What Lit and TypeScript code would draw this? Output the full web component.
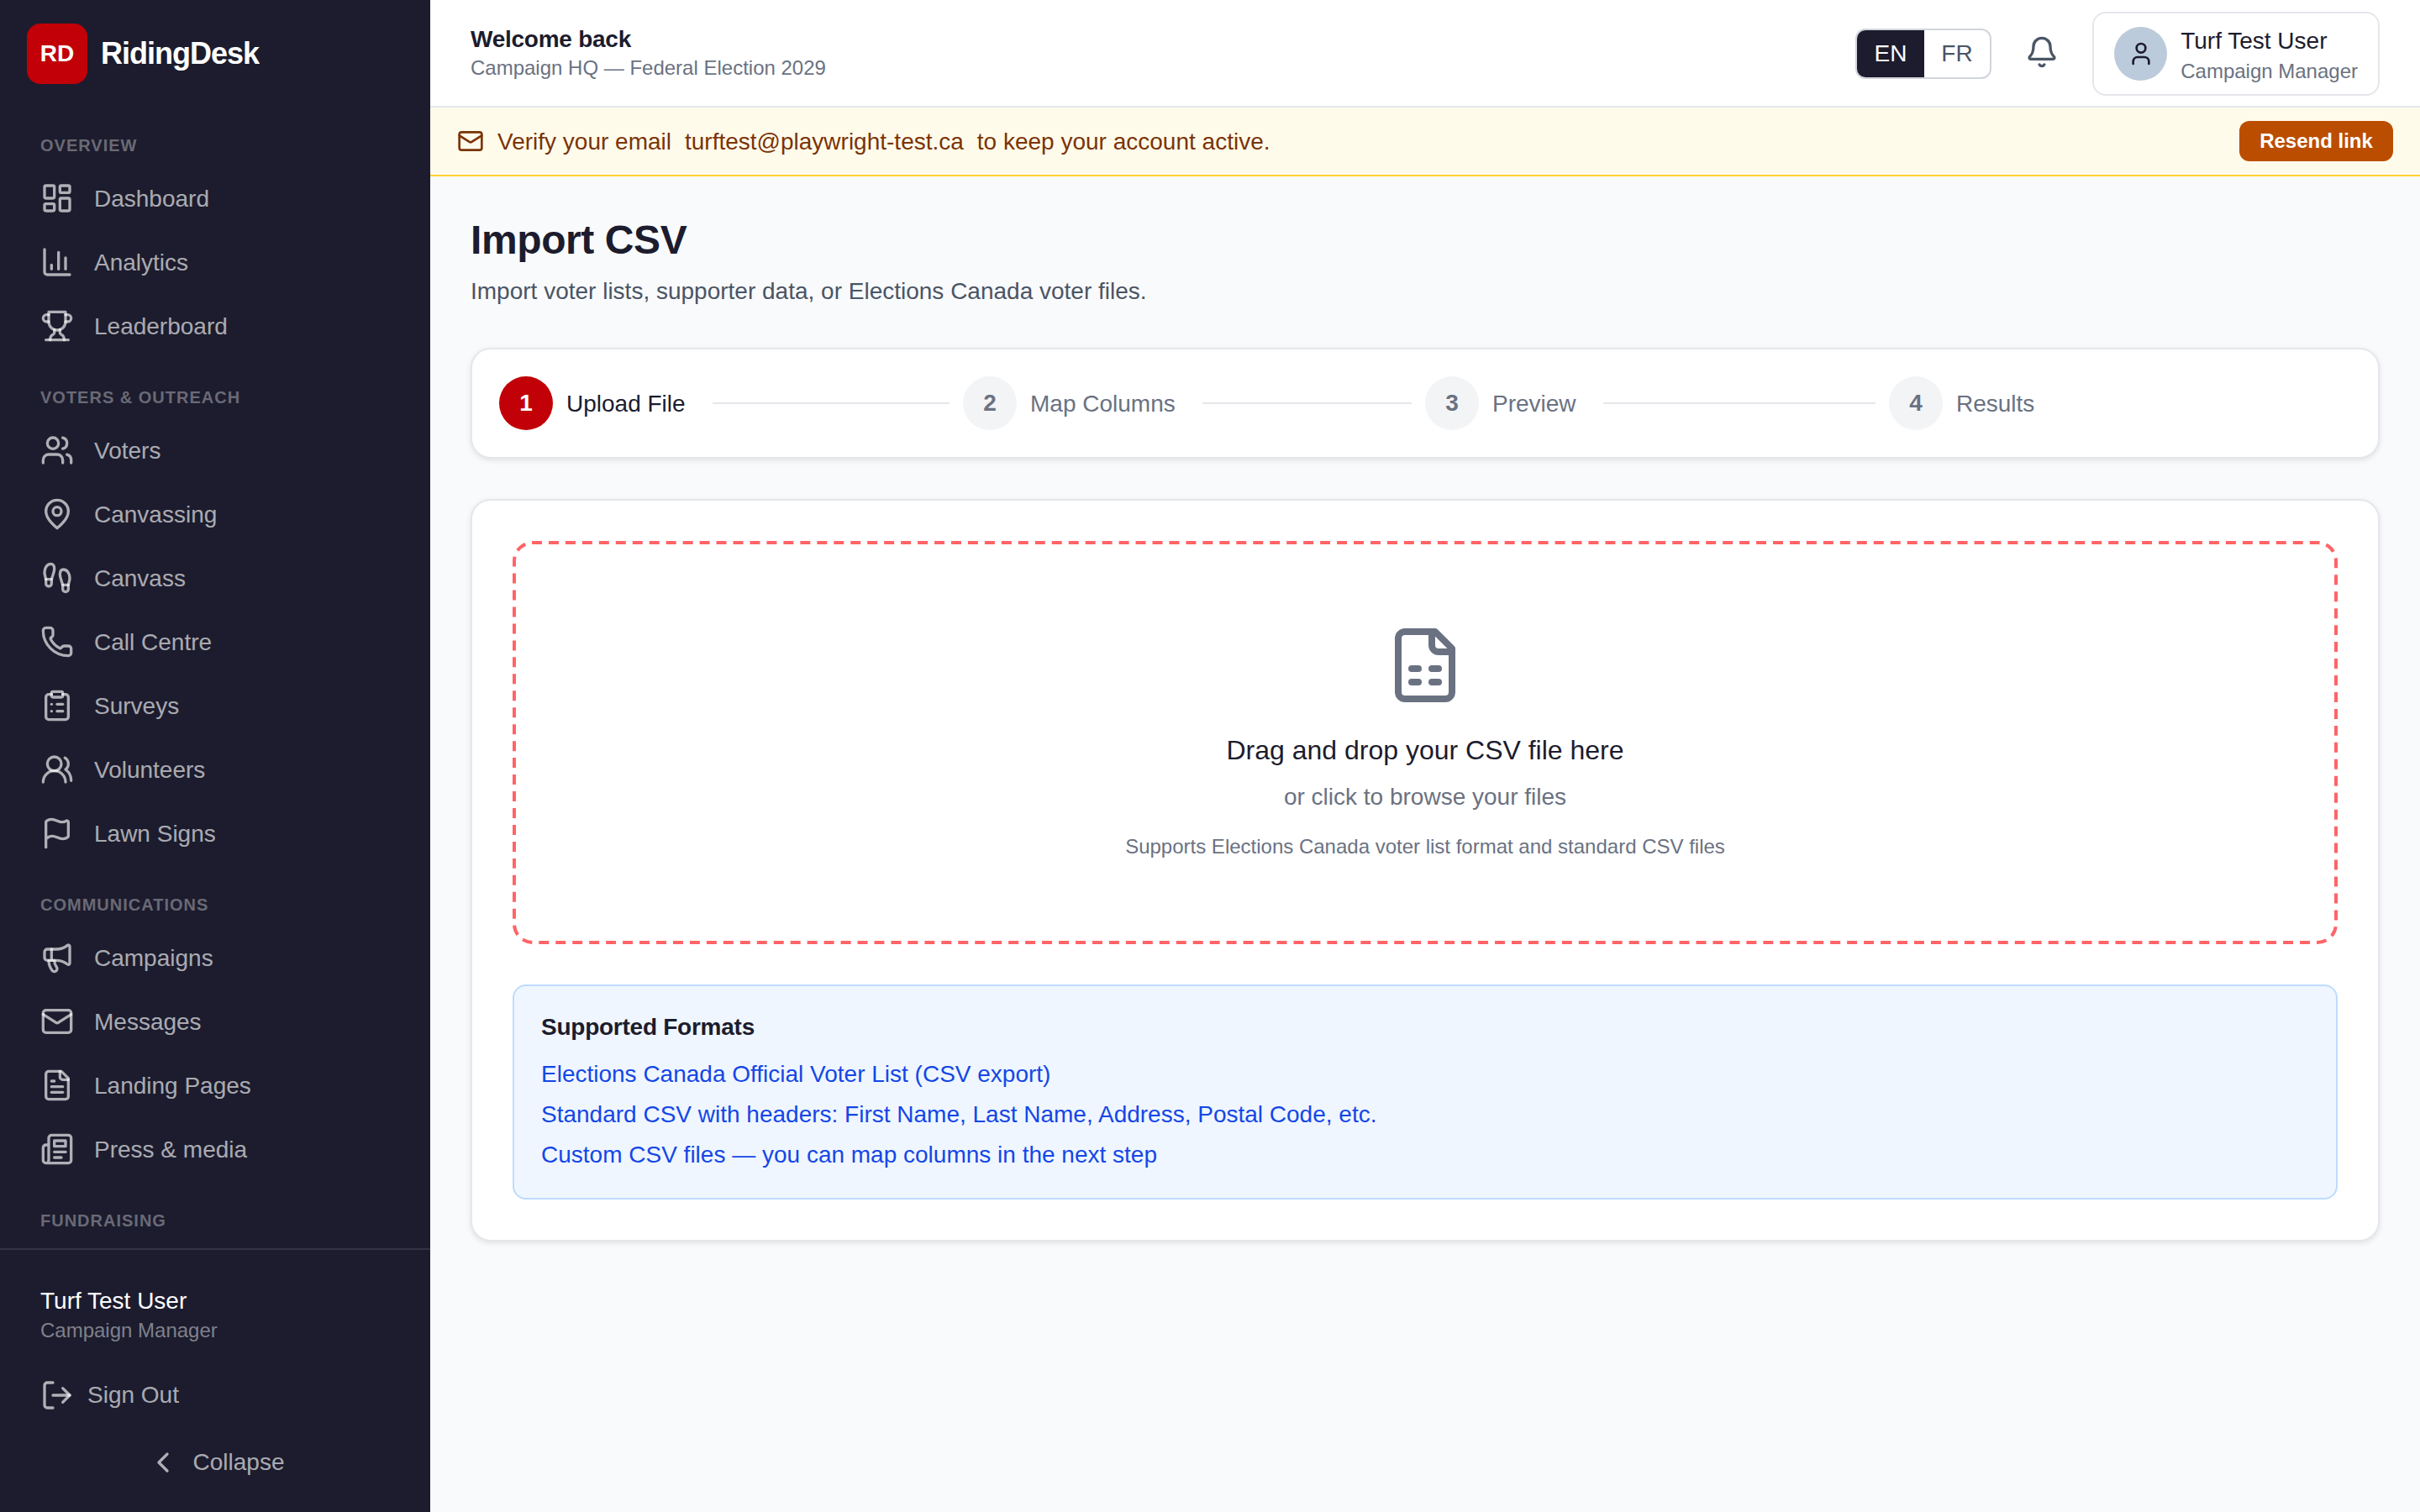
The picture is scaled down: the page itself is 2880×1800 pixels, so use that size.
import { css, html, LitElement, svg } from "lit";
import { customElement } from "lit/decorators.js";

// lucide-style icon bodies, all on a 24 unit box
const ICONS: Record<string, unknown> = {
  dashboard: svg`<rect x="3" y="3" width="7" height="9" rx="1"/><rect x="14" y="3" width="7" height="5" rx="1"/><rect x="14" y="12" width="7" height="9" rx="1"/><rect x="3" y="16" width="7" height="5" rx="1"/>`,
  chart: svg`<path d="M3 3v16a2 2 0 0 0 2 2h16"/><path d="M18 17V9"/><path d="M13 17V5"/><path d="M8 17v-3"/>`,
  trophy: svg`<path d="M6 9H4.5a2.5 2.5 0 0 1 0-5H6"/><path d="M18 9h1.5a2.5 2.5 0 0 0 0-5H18"/><path d="M4 22h16"/><path d="M10 14.66V17c0 .55-.47.98-.97 1.21C7.85 18.75 7 20.24 7 22"/><path d="M14 14.66V17c0 .55.47.98.97 1.21C16.15 18.75 17 20.24 17 22"/><path d="M18 2H6v7a6 6 0 0 0 12 0V2Z"/>`,
  users: svg`<path d="M16 21v-2a4 4 0 0 0-4-4H6a4 4 0 0 0-4 4v2"/><circle cx="9" cy="7" r="4"/><path d="M22 21v-2a4 4 0 0 0-3-3.87"/><path d="M16 3.13a4 4 0 0 1 0 7.75"/>`,
  pin: svg`<path d="M20 10c0 6-8 12-8 12s-8-6-8-12a8 8 0 0 1 16 0Z"/><circle cx="12" cy="10" r="3"/>`,
  footprints: svg`<path d="M4 16v-2.38C4 11.5 2.97 10.5 3 8c.03-2.72 1.49-6 4.5-6C9.37 2 10 3.8 10 5.5c0 3.11-2 5.66-2 8.68V16a2 2 0 1 1-4 0Z"/><path d="M20 20v-2.38c0-2.12 1.03-3.12 1-5.62-.03-2.72-1.49-6-4.5-6C14.63 6 14 7.8 14 9.5c0 3.11 2 5.66 2 8.68V20a2 2 0 1 0 4 0Z"/><path d="M16 17h4"/><path d="M4 13h4"/>`,
  phone: svg`<path d="M13.832 16.568a1 1 0 0 0 1.213-.303l.355-.465A2 2 0 0 1 17 15h3a2 2 0 0 1 2 2v3a2 2 0 0 1-2 2A18 18 0 0 1 2 4a2 2 0 0 1 2-2h3a2 2 0 0 1 2 2v3a2 2 0 0 1-.8 1.6l-.468.351a1 1 0 0 0-.292 1.233 14 14 0 0 0 6.392 6.384"/>`,
  clipboard: svg`<rect x="8" y="2" width="8" height="4" rx="1"/><path d="M16 4h2a2 2 0 0 1 2 2v14a2 2 0 0 1-2 2H6a2 2 0 0 1-2-2V6a2 2 0 0 1 2-2h2"/><path d="M12 11h4"/><path d="M12 16h4"/><path d="M8 11h.01"/><path d="M8 16h.01"/>`,
  usersRound: svg`<path d="M18 21a8 8 0 0 0-16 0"/><circle cx="10" cy="8" r="5"/><path d="M22 20c0-3.37-2-6.5-4-8a5 5 0 0 0-.45-8.3"/>`,
  flag: svg`<path d="M4 22V4a1 1 0 0 1 .4-.8A6 6 0 0 1 8 2c3 0 5 2 7.333 2q2 0 3.067-.8A1 1 0 0 1 20 4v10a1 1 0 0 1-.4.8A6 6 0 0 1 16 16c-3 0-5-2-7.333-2q-2 0-3.067.8A1 1 0 0 1 4 15"/>`,
  megaphone: svg`<path d="M11 6a13 13 0 0 0 8.4-2.8A1 1 0 0 1 21 4v12a1 1 0 0 1-1.6.8A13 13 0 0 0 11 14H5a2 2 0 0 1-2-2V8a2 2 0 0 1 2-2z"/><path d="M6 14a12 12 0 0 0 2.4 7.2 2 2 0 0 0 3.2-2.4A8 8 0 0 1 10 14"/><path d="M8 6v8"/>`,
  mail: svg`<path d="m22 7-8.991 5.727a2 2 0 0 1-2.009 0L2 7"/><rect x="2" y="4" width="20" height="16" rx="2"/>`,
  fileText: svg`<path d="M15 2H6a2 2 0 0 0-2 2v16a2 2 0 0 0 2 2h12a2 2 0 0 0 2-2V7Z"/><path d="M14 2v4a2 2 0 0 0 2 2h4"/><path d="M10 9H8"/><path d="M16 13H8"/><path d="M16 17H8"/>`,
  newspaper: svg`<path d="M4 22h16a2 2 0 0 0 2-2V4a2 2 0 0 0-2-2H8a2 2 0 0 0-2 2v16a2 2 0 0 1-2 2Zm0 0a2 2 0 0 1-2-2v-9c0-1.1.9-2 2-2h2"/><path d="M18 14h-8"/><path d="M15 18h-5"/><path d="M10 6h8v4h-8V6Z"/>`,
  logOut: svg`<path d="M9 21H5a2 2 0 0 1-2-2V5a2 2 0 0 1 2-2h4"/><path d="m16 17 5-5-5-5"/><path d="M21 12H9"/>`,
  chevronLeft: svg`<path d="m15 18-6-6 6-6"/>`,
  bell: svg`<path d="M10.268 21a2 2 0 0 0 3.464 0"/><path d="M3.262 15.326A1 1 0 0 0 4 17h16a1 1 0 0 0 .74-1.673C19.41 13.956 18 12.499 18 8A6 6 0 0 0 6 8c0 4.499-1.411 5.956-2.738 7.326"/>`,
  user: svg`<path d="M19 21v-2a4 4 0 0 0-4-4H9a4 4 0 0 0-4 4v2"/><circle cx="12" cy="7" r="4"/>`,
  sheet: svg`<path d="M15 2H6a2 2 0 0 0-2 2v16a2 2 0 0 0 2 2h12a2 2 0 0 0 2-2V7Z"/><path d="M14 2v4a2 2 0 0 0 2 2h4"/><path d="M8 13h2"/><path d="M14 13h2"/><path d="M8 17h2"/><path d="M14 17h2"/>`,
};

const icon = (name: string, size = 40) => html`<svg
  width=${size}
  height=${size}
  viewBox="0 0 24 24"
  fill="none"
  stroke="currentColor"
  stroke-width="2"
  stroke-linecap="round"
  stroke-linejoin="round"
>${ICONS[name]}</svg>`;

const NAV = [
  {
    title: "Overview",
    items: [
      ["dashboard", "Dashboard"],
      ["chart", "Analytics"],
      ["trophy", "Leaderboard"],
    ],
  },
  {
    title: "Voters & Outreach",
    items: [
      ["users", "Voters"],
      ["pin", "Canvassing"],
      ["footprints", "Canvass"],
      ["phone", "Call Centre"],
      ["clipboard", "Surveys"],
      ["usersRound", "Volunteers"],
      ["flag", "Lawn Signs"],
    ],
  },
  {
    title: "Communications",
    items: [
      ["megaphone", "Campaigns"],
      ["mail", "Messages"],
      ["fileText", "Landing Pages"],
      ["newspaper", "Press & media"],
    ],
  },
  { title: "Fundraising", items: [] },
];

const STEPS = ["Upload File", "Map Columns", "Preview", "Results"];

const FORMATS = [
  "Elections Canada Official Voter List (CSV export)",
  "Standard CSV with headers: First Name, Last Name, Address, Postal Code, etc.",
  "Custom CSV files — you can map columns in the next step",
];

@customElement("app-root")
export class AppRoot extends LitElement {
  static styles = css`
    :host {
      display: flex;
      width: 100%;
      height: 100vh;
      overflow: hidden;
      font-family: "Liberation Sans", Arial, sans-serif;
      font-size: 28px;
      color: #1c1c2e;
      background: #f9fafb;
    }
    svg {
      display: block;
      flex: none;
    }

    /* sidebar */
    .sidebar {
      flex: none;
      width: 512px;
      display: flex;
      flex-direction: column;
      background: #1c1c2e;
      color: rgba(255, 255, 255, 0.65);
    }
    .brand {
      display: flex;
      align-items: center;
      gap: 16px;
      padding: 28px 32px 26px;
    }
    .logo {
      width: 72px;
      height: 72px;
      border-radius: 16px;
      background: #c10007;
      color: #fff;
      font-weight: 700;
      font-size: 28px;
      display: flex;
      align-items: center;
      justify-content: center;
    }
    .brand-name {
      color: #fff;
      font-weight: 700;
      font-size: 36px;
      letter-spacing: -1px;
    }
    .nav {
      flex: 1;
      min-height: 0;
      overflow: hidden;
    }
    .group {
      padding-top: 34px;
    }
    .group-title {
      height: 24px;
      line-height: 26px;
      margin: 0 48px 14px;
      font-size: 20px;
      font-weight: 700;
      letter-spacing: 1px;
      text-transform: uppercase;
      color: rgba(255, 255, 255, 0.35);
    }
    .nav-item {
      height: 76px;
      display: flex;
      align-items: center;
      gap: 24px;
      padding: 0 48px;
    }
    .nav-item span {
      padding-top: 2px;
    }
    .sidebar-foot {
      flex: none;
      border-top: 2px solid rgba(255, 255, 255, 0.1);
      padding: 41px 0 21px;
    }
    .foot-name {
      padding: 0 48px;
      line-height: 40px;
      color: #fff;
    }
    .foot-role {
      padding: 0 48px 2px;
      line-height: 30px;
      font-size: 24px;
      color: rgba(255, 255, 255, 0.45);
    }
    .sign-out {
      height: 76px;
      margin-top: 22px;
      padding: 0 48px;
      display: flex;
      align-items: center;
      gap: 16px;
    }
    .collapse {
      height: 76px;
      margin-top: 4px;
      display: flex;
      align-items: center;
      justify-content: center;
      gap: 16px;
    }

    /* top bar */
    .main {
      flex: 1;
      min-width: 0;
      display: flex;
      flex-direction: column;
    }
    .topbar {
      flex: none;
      box-sizing: border-box;
      height: 128px;
      padding: 2px 48px 0;
      display: flex;
      align-items: center;
      background: #fff;
      border-bottom: 2px solid #e5e7eb;
    }
    .welcome {
      flex: 1;
      margin-bottom: 2px;
    }
    .welcome-title {
      font-weight: 700;
      line-height: 36px;
      letter-spacing: -0.25px;
    }
    .welcome-sub {
      font-size: 24px;
      line-height: 32px;
      color: #6a7282;
    }
    .lang {
      display: flex;
      box-sizing: border-box;
      height: 60px;
      border: 2px solid #d1d5dc;
      border-radius: 12px;
      overflow: hidden;
      color: #4a5565;
    }
    .lang span {
      width: 78px;
      display: flex;
      align-items: center;
      justify-content: center;
    }
    .lang .on {
      width: 80px;
      background: #1c1c2e;
      color: #fff;
    }
    .bell {
      margin: 0 40px 4px;
      color: #4a5565;
    }
    .chip {
      box-sizing: border-box;
      height: 100px;
      width: 342px;
      padding: 0 24px;
      display: flex;
      align-items: center;
      gap: 16px;
      border: 2px solid #e5e7eb;
      border-radius: 16px;
    }
    .avatar {
      width: 64px;
      height: 64px;
      border-radius: 50%;
      background: #bccbdb;
      color: #1c1c2e;
      display: flex;
      align-items: center;
      justify-content: center;
    }
    .chip-text {
      padding-top: 6px;
    }
    .chip-name {
      line-height: 36px;
      white-space: nowrap;
    }
    .chip-role {
      font-size: 24px;
      line-height: 35px;
      padding-bottom: 1px;
      white-space: nowrap;
      color: #6a7282;
    }

    /* email banner */
    .banner {
      flex: none;
      padding: 16px 32px;
      display: flex;
      align-items: center;
      gap: 16px;
      background: #fffbeb;
      border-bottom: 2px solid #ffd230;
      color: #7b3306;
    }
    .banner-text {
      flex: 1;
      display: flex;
      gap: 16px;
      padding-top: 2px;
      font-size: 28px;
    }
    .resend {
      width: 183px;
      height: 48px;
      border-radius: 12px;
      background: #bb4d00;
      color: #fff;
      font-size: 24px;
      font-weight: 700;
      display: flex;
      align-items: center;
      justify-content: center;
    }

    /* page */
    .content {
      flex: 1;
      padding: 48px;
    }
    h1 {
      margin: 0;
      font-size: 48px;
      line-height: 56px;
      font-weight: 700;
      letter-spacing: -0.4px;
    }
    .subtitle {
      margin: 13px 0 47px;
      font-size: 28px;
      line-height: 40px;
      color: #4a5565;
    }
    .card {
      background: #fff;
      border: 2px solid #e5e7eb;
      border-radius: 24px;
      box-shadow: 0 2px 6px rgba(0, 0, 0, 0.1);
    }
    .stepper {
      display: grid;
      grid-template-columns: 552px 550px 552px 1fr;
      padding: 32px;
      margin-bottom: 48px;
    }
    .step {
      display: flex;
      align-items: center;
      gap: 16px;
      color: #6a7282;
    }
    .step-label {
      padding-top: 2px;
    }
    .step-num {
      flex: none;
      width: 64px;
      height: 64px;
      border-radius: 50%;
      background: #f3f4f6;
      font-weight: 700;
      display: flex;
      align-items: center;
      justify-content: center;
    }
    .step.active {
      color: #1c1c2e;
    }
    .step.active .step-num {
      background: #c10007;
      color: #fff;
    }
    .step-line {
      flex: 1;
      height: 2px;
      margin: 0 16px;
      background: #e5e7eb;
    }
    .upload {
      padding: 48px;
    }
    .drop {
      position: relative;
      box-sizing: border-box;
      height: 480px;
      padding-top: 100px;
      display: flex;
      flex-direction: column;
      align-items: center;
      color: #6a7282;
      text-align: center;
    }
    .drop-border {
      position: absolute;
      inset: 0;
      color: #ff6467;
    }
    .drop-title {
      margin-top: 25px;
      font-size: 32px;
      line-height: 56px;
      color: #1c1c2e;
    }
    .drop-sub {
      margin-top: 8px;
      line-height: 40px;
    }
    .drop-note {
      margin-top: 23px;
      font-size: 24px;
      line-height: 32px;
    }
    .formats {
      margin-top: 48px;
      padding: 33px 32px 31px;
      background: #eff6ff;
      border: 2px solid #bedbff;
      border-radius: 16px;
    }
    .formats h3 {
      margin: 0 0 20px;
      font-size: 28px;
      line-height: 32px;
      font-weight: 700;
      letter-spacing: -0.25px;
    }
    .formats div {
      line-height: 40px;
      color: #1447e6;
    }
    .formats div + div {
      margin-top: 8px;
    }
  `;

  render() {
    return html`
      <aside class="sidebar">
        <div class="brand">
          <div class="logo">RD</div>
          <div class="brand-name">RidingDesk</div>
        </div>
        <nav class="nav">
          ${NAV.map(
            (group) => html`
              <div class="group">
                <div class="group-title">${group.title}</div>
                ${group.items.map(
                  ([ic, label]) => html`
                    <div class="nav-item">${icon(ic)}<span>${label}</span></div>
                  `
                )}
              </div>
            `
          )}
        </nav>
        <div class="sidebar-foot">
          <div class="foot-name">Turf Test User</div>
          <div class="foot-role">Campaign Manager</div>
          <div class="sign-out">${icon("logOut")}<span>Sign Out</span></div>
          <div class="collapse">${icon("chevronLeft")}<span>Collapse</span></div>
        </div>
      </aside>
      <div class="main">
        <header class="topbar">
          <div class="welcome">
            <div class="welcome-title">Welcome back</div>
            <div class="welcome-sub">Campaign HQ — Federal Election 2029</div>
          </div>
          <div class="lang"><span class="on">EN</span><span>FR</span></div>
          <div class="bell">${icon("bell")}</div>
          <div class="chip">
            <div class="avatar">${icon("user", 32)}</div>
            <div class="chip-text">
              <div class="chip-name">Turf Test User</div>
              <div class="chip-role">Campaign Manager</div>
            </div>
          </div>
        </header>
        <div class="banner">
          ${icon("mail", 32)}
          <div class="banner-text">
            <span>Verify your email</span>
            <span>turftest@playwright-test.ca</span>
            <span>to keep your account active.</span>
          </div>
          <div class="resend">Resend link</div>
        </div>
        <main class="content">
          <h1>Import CSV</h1>
          <div class="subtitle">
            Import voter lists, supporter data, or Elections Canada voter files.
          </div>
          <div class="card stepper">
            ${STEPS.map(
              (label, i) => html`
                <div class="step ${i === 0 ? "active" : ""}">
                  <div class="step-num">${i + 1}</div>
                  <span class="step-label">${label}</span>
                  ${i < STEPS.length - 1 ? html`<div class="step-line"></div>` : ""}
                </div>
              `
            )}
          </div>
          <div class="card upload">
            <div class="drop">
              <svg class="drop-border" width="2172" height="480">
                <rect
                  x="2"
                  y="2"
                  width="2168"
                  height="476"
                  rx="22"
                  fill="none"
                  stroke="currentColor"
                  stroke-width="4"
                  pathLength="5260"
                  stroke-dasharray="12 8"
                  stroke-dashoffset="1"
                />
              </svg>
              ${icon("sheet", 96)}
              <div class="drop-title">Drag and drop your CSV file here</div>
              <div class="drop-sub">or click to browse your files</div>
              <div class="drop-note">
                Supports Elections Canada voter list format and standard CSV files
              </div>
            </div>
            <div class="formats">
              <h3>Supported Formats</h3>
              ${FORMATS.map((f) => html`<div>${f}</div>`)}
            </div>
          </div>
        </main>
      </div>
    `;
  }
}
